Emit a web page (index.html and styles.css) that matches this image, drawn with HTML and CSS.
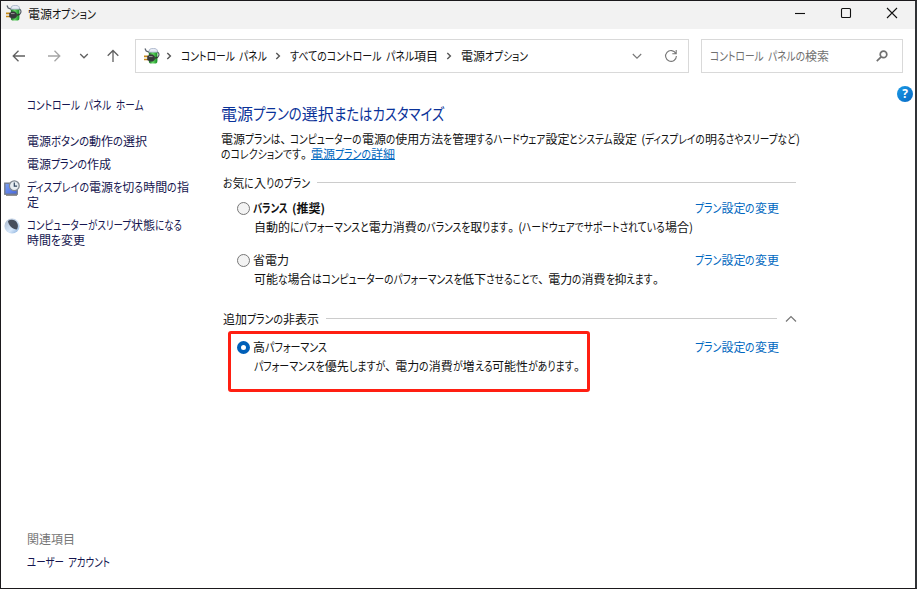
FILE: index.html
```html
<!DOCTYPE html>
<html lang="ja">
<head>
<meta charset="utf-8">
<title>電源オプション</title>
<link rel="stylesheet" href="styles.css">
</head>
<body>
<svg class="defs" width="0" height="0">
  <defs>
    <linearGradient id="green" x1="0" x2="1" y1="0" y2="0"><stop offset="0" stop-color="#176d20"/><stop offset=".45" stop-color="#65dc65"/><stop offset="1" stop-color="#168b24"/></linearGradient>
    <linearGradient id="screen" x1="0" x2="1" y1="0" y2="1"><stop offset="0" stop-color="#7da2f5"/><stop offset="1" stop-color="#4565dc"/></linearGradient>
    <linearGradient id="moon" x1="0" x2="1" y1="0" y2="1"><stop offset="0" stop-color="#a9b8cc"/><stop offset=".6" stop-color="#d5e6fa"/><stop offset="1" stop-color="#7fa9d8"/></linearGradient>
    <symbol id="power" viewBox="0 0 16 16">
      <path d="M1 0.5 2.2 3l3 1.2" fill="none" stroke="#59606a" stroke-width="1.3"/>
      <path d="M12.6 4.2q2.8.2 2.3 3-.4 2.3-2.4 3" fill="none" stroke="#59606a" stroke-width="1.2"/>
      <rect x="4.8" y="1.6" width="8.6" height="14" rx="2.6" fill="url(#green)"/>
      <path d="M5 4.2V3q0-2.6 4.2-2.6T13.4 3v1.2z" fill="#e6ebf5" stroke="#98a5bd" stroke-width=".7"/>
      <path d="M0 8.4h4M0 11.5h4" stroke="#c78b18" stroke-width="1.7"/>
      <path d="M3.2 8.2 6 6.6h2.8l2 2v3.2l-2 1.8H6L3.2 12z" fill="#37393c"/>
      <path d="M5 8.6h3.6" stroke="#999" stroke-width="1"/>
      <path d="M10.6 10q2 .1 2.8-1.2" fill="none" stroke="#333" stroke-width="1.4"/>
    </symbol>
    <symbol id="crumb" viewBox="0 0 6 8"><path d="M1.3 1 4.4 4 1.3 7" fill="none" stroke="#555" stroke-width="1.4"/></symbol>
  </defs>
</svg>
<div class="window">
  <header class="titlebar">
    <svg class="app"><use href="#power"/></svg>
    <span class="t grow" data-w="68">電源オプション</span>
    <svg class="cap" viewBox="0 0 12 12"><path d="M1 6.5h10" /></svg>
    <svg class="cap" viewBox="0 0 12 12"><rect x="1.5" y="1.5" width="9" height="9" rx="1"/></svg>
    <svg class="cap" viewBox="0 0 12 12"><path d="m1 1 10 10M11 1 1 11"/></svg>
  </header>
  <nav class="toolbar">
    <div class="arrows">
      <svg viewBox="0 0 14 14"><path d="M13 7H1.5M6.5 1.7 1.2 7l5.3 5.3"/></svg>
      <svg class="dim" viewBox="0 0 14 14"><path d="M1 7h11.5M7.5 1.7 12.8 7l-5.3 5.3"/></svg>
      <svg viewBox="0 0 14 14"><path d="M3.2 5 7 8.8 10.8 5"/></svg>
      <svg viewBox="0 0 14 14"><path d="M7 13V1.5M1.7 6.8 7 1.5l5.3 5.3"/></svg>
    </div>
    <div class="address">
      <svg class="app"><use href="#power"/></svg>
      <svg class="crumb c1"><use href="#crumb"/></svg>
      <span class="t" data-w="86">コントロール パネル</span>
      <svg class="crumb"><use href="#crumb"/></svg>
      <span class="t" data-w="148">すべてのコントロール パネル項目</span>
      <svg class="crumb"><use href="#crumb"/></svg>
      <span class="t grow" data-w="67">電源オプション</span>
      <svg class="tool" viewBox="0 0 14 14"><path d="M2.8 5 7 9.2 11.2 5"/></svg>
      <svg class="tool reload" viewBox="0 0 14 14"><path d="M11.8 4.5A5.4 5.4 0 1 0 12.4 7M12.2 1v3.8H8.3"/></svg>
    </div>
    <div class="search">
      <span class="t grow" data-w="119">コントロール パネルの検索</span>
      <svg class="lens" viewBox="0 0 12 12"><circle cx="7.5" cy="4.4" r="3.3"/><path d="m5.1 6.8-4.3 4.3"/></svg>
    </div>
  </nav>
  <div class="body">
    <aside class="side">
      <a class="home"><span class="t" data-w="116">コントロール パネル ホーム</span></a>
      <a class="task"><span class="t" data-w="120">電源ボタンの動作の選択</span></a>
      <a class="task"><span class="t" data-w="84">電源プランの作成</span></a>
      <a class="task">
        <svg class="icon" viewBox="0 0 16 16"><rect x=".8" y="3.2" width="12.4" height="11" fill="url(#screen)" stroke="#737b8c" stroke-width="1.4"/><path d="M2 15.2h11" stroke="#777" stroke-width="1.2"/><circle cx="10.3" cy="5.7" r="4.9" fill="#e8eef2" stroke="#818991" stroke-width="1.3"/><path d="M10.3 2.6v3.5h2.8" fill="none" stroke="#31465e" stroke-width="1.2"/></svg>
        <span class="t" data-w="162">ディスプレイの電源を切る時間の指</span>
        <span class="t">定</span>
      </a>
      <a class="task">
        <svg class="icon" viewBox="0 0 16 16"><circle cx="8" cy="8" r="7.6" fill="url(#moon)"/><path d="M4 3C7 .9 11.4 1.6 13.2 5c1.2 2.4.8 4.8-.4 6.4C8.6 11.2 4.6 7.8 4 3z" fill="#474e5c"/></svg>
        <span class="t" data-w="155">コンピューターがスリープ状態になる</span>
        <span class="t" data-w="58">時間を変更</span>
      </a>
      <div class="related"><span class="t">関連項目</span></div>
      <a class="task"><span class="t" data-w="83">ユーザー アカウント</span></a>
    </aside>
    <main class="main">
      <h1><span class="t" data-w="223">電源プランの選択またはカスタマイズ</span></h1>
      <p class="intro"><span class="t" data-w="579">電源プランは、コンピューターの電源の使用方法を管理するハードウェア設定とシステム設定 (ディスプレイの明るさやスリープなど)</span><br><span class="t" data-w="90">のコレクションです。</span><a class="under"><span class="t" data-w="84">電源プランの詳細</span></a></p>
      <div class="group"><span class="t" data-w="87">お気に入りのプラン</span><i class="rule"></i></div>
      <section class="plan">
        <i class="radio"></i>
        <span class="t name strong" data-w="72">バランス (推奨)</span>
        <a class="change"><span class="t" data-w="84">プラン設定の変更</span></a>
        <p class="desc"><span class="t" data-w="439">自動的にパフォーマンスと電力消費のバランスを取ります。(ハードウェアでサポートされている場合)</span></p>
      </section>
      <section class="plan second">
        <i class="radio"></i>
        <span class="t name">省電力</span>
        <a class="change"><span class="t" data-w="84">プラン設定の変更</span></a>
        <p class="desc"><span class="t" data-w="409">可能な場合はコンピューターのパフォーマンスを低下させることで、電力の消費を抑えます。</span></p>
      </section>
      <div class="group more"><span class="t" data-w="96">追加プランの非表示</span><i class="rule"></i><svg class="fold" viewBox="0 0 12 8"><path d="m1 6.5 5-5 5 5"/></svg></div>
      <section class="plan third">
        <i class="radio on"></i>
        <span class="t name" data-w="74">高パフォーマンス</span>
        <a class="change"><span class="t" data-w="84">プラン設定の変更</span></a>
        <p class="desc"><span class="t" data-w="330">パフォーマンスを優先しますが、電力の消費が増える可能性があります。</span></p>
        <i class="marker"></i>
      </section>
    </main>
    <span class="help">?</span>
  </div>
</div>
<script src="kana.js"></script>
</body>
</html>
```
FILE: styles.css
```css
* { box-sizing: border-box; }
body {
  margin: 0;
  font: 12px/15px "Noto Sans CJK JP", sans-serif;
  color: #111;
  background: #fff;
}
.defs { position: absolute; }
h1, p { margin: 0; font-weight: normal; }
.t { white-space: pre; font-feature-settings: "palt"; word-spacing: 1.5px; }
.run { display: inline-block; }
.run > span { display: inline-block; transform-origin: 0 50%; }
.stop { padding-right: 4px; }
.grow { flex: 1; }
svg { display: block; flex: none; fill: none; }

.window {
  width: 917px;
  height: 589px;
  display: flex;
  flex-direction: column;
  border: 1px solid #1b191c;
  border-right: 2px solid #303236;
  overflow: hidden;
}
.titlebar {
  height: 28px;
  flex: none;
  display: flex;
  align-items: center;
  padding: 0 17px 4px 5px;
  background: #f2f2f2;
}
.app { width: 16px; height: 16px; }
.titlebar .app { margin-right: 6px; }
.cap { width: 12px; height: 12px; stroke: #111; stroke-width: 1.1; }
.cap + .cap { margin-left: 34px; }

.toolbar { display: flex; height: 54px; flex: none; padding: 10px 12px 10px 11px; }
.arrows { display: flex; align-items: center; width: 123px; gap: 18px; }
.arrows svg { width: 14px; height: 14px; stroke: #606060; stroke-width: 1.3; }
.arrows svg:nth-child(2) { margin-left: 3px; }
.arrows svg:nth-child(3) { margin-left: -2px; margin-right: -3px; }
.arrows .dim { stroke: #a5a5a5; }
.address, .search { display: flex; align-items: center; border: 1px solid #d9d9d9; }
.address { width: 554px; padding: 0 10px 0 8px; }
.search { width: 202px; margin-left: 12px; padding: 0 14px 0 8px; color: #707070; }
.address .t, .search .t { margin-top: -2px; }
.crumb { width: 6px; height: 8px; margin: 0 9px 0 8px; }
.crumb.c1 { margin-left: 6px; }
.tool { width: 14px; height: 14px; stroke: #777; stroke-width: 1.1; }
.reload { margin-left: 20px; }
.lens { width: 12px; height: 12px; stroke: #707070; stroke-width: 1.7; }

.body { position: relative; flex: 1; display: flex; }
.side { width: 220px; padding: 14px 0 0 26px; display: flex; flex-direction: column; color: #15154f; }
.side .t { display: block; }
.home { margin-bottom: 21px; }
.task { position: relative; margin-bottom: 8px; }
.icon { position: absolute; left: -23px; top: 1px; width: 16px; height: 16px; }
.related { margin-top: auto; margin-bottom: 8px; color: #777; }
.side > .task:last-child { margin-bottom: 19px; }

.main { width: 575px; padding-top: 20px; }
h1 { font-size: 16px; line-height: 20px; color: #0a3299; }
.intro { margin-top: 8px; white-space: nowrap; }
.under { color: #0067c0; display: inline-block; height: 14px; border-bottom: 1px solid #0067c0; vertical-align: top; }
.change { color: #0067c0; }
.group { display: flex; align-items: center; height: 15px; margin-top: 14px; padding-left: 2px; }
.group .t { margin-top: -1px; }
.rule { flex: 1; height: 1px; margin-left: 7px; background: #ccc; }
.plan {
  position: relative;
  display: grid;
  grid-template-columns: 16px 442px auto;
  row-gap: 4px;
  align-items: center;
  margin-top: 10px;
  padding-left: 16px;
}
.second { margin-top: 18px; }
.third { margin-top: 13px; }
.more { margin-top: 25px; }
.fold { width: 12px; height: 8px; margin: 0 -1px 0 8px; stroke: #777; stroke-width: 1.2; }
.radio { width: 13px; height: 13px; margin-top: 2px; border: 1px solid #777; border-radius: 50%; background: #f3f3f3; }
.radio.on { border: 4px solid #005fb8; background: #fff; }
.strong { font-weight: 700; }
.desc { grid-column: 2 / -1; padding-left: 1px; white-space: nowrap; }
.marker {
  position: absolute;
  left: 7px;
  top: -8px;
  width: 362px;
  height: 61px;
  border: 3px solid #ff1f12;
  border-radius: 3px;
}
.help {
  position: absolute;
  right: 2px;
  top: 3px;
  width: 16px;
  height: 16px;
  border-radius: 50%;
  background: linear-gradient(135deg, #1b9be6, #0768c4);
  color: #fff;
  font: bold 12px/16px "Open Sans", sans-serif;
  text-align: center;
}
```
FILE: kana.js
```javascript
// Condenses kana runs so each label takes its intended width while kanji keep theirs.
const pieces = /([\u3041-\u30ff]+|[\u3001\u3002])/;
const kana = /^[\u3041-\u30ff]/;
const stop = /^[\u3001\u3002]/;

function condense(label) {
  const target = Number(label.dataset.w);
  const parts = label.textContent.split(pieces);
  label.textContent = "";
  const runs = [];
  let rest = 0;
  for (const part of parts) {
    if (!part) continue;
    const inner = document.createElement("span");
    inner.textContent = part;
    if (stop.test(part)) inner.className = "stop";
    label.append(inner);
    const width = inner.getBoundingClientRect().width;
    if (kana.test(part)) runs.push({ inner, width });
    else rest += width;
  }
  const total = runs.reduce((sum, run) => sum + run.width, 0);
  const scale = (target - rest) / total;
  for (const { inner, width } of runs) {
    const outer = document.createElement("span");
    outer.className = "run";
    outer.style.width = width * scale + "px";
    inner.replaceWith(outer);
    outer.append(inner);
    inner.style.transform = `scaleX(${scale})`;
  }
}

document.querySelectorAll("[data-w]").forEach(condense);
```
